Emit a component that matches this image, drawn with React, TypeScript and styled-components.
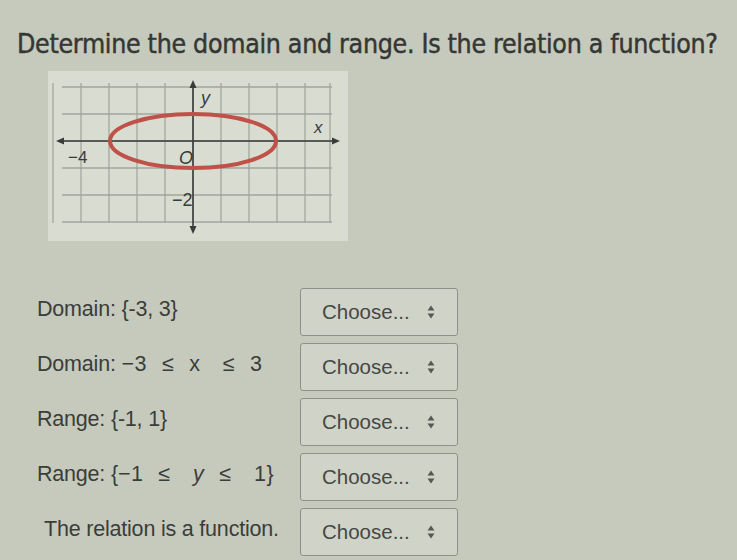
import React from 'react'
import styled, { createGlobalStyle } from 'styled-components'

const GlobalStyle = createGlobalStyle`
    html, body {
        margin: 0;
        padding: 0;
        background: #c6cabc;
    }
`;

interface Row {
    label: React.ReactNode;
    indent?: number;
}

const Graph = () => {
    const xs = [5, 33, 61, 89, 117, 145, 173, 201, 229, 257, 282];
    const ys = [16, 43, 70, 97, 124, 151];
    return (
        <svg width="300" height="170" viewBox="0 0 300 170">
            {xs.map((x) => (
                <line key={'v' + x} x1={x} y1={12} x2={x} y2={152} stroke="#a3a69c" strokeWidth="1.3" />
            ))}
            {ys.map((y) => (
                <line key={'h' + y} x1={14} y1={y} x2={284} y2={y} stroke="#a3a69c" strokeWidth="1.3" />
            ))}
            <line x1={10} y1={70} x2={290} y2={70} stroke="#3a3c3a" strokeWidth="1.6" />
            <path d="M8 70 L16 66.5 L16 73.5 Z" fill="#3a3c3a" />
            <path d="M292 70 L284 66.5 L284 73.5 Z" fill="#3a3c3a" />
            <line x1={145} y1={12} x2={145} y2={160} stroke="#3a3c3a" strokeWidth="1.6" />
            <path d="M145 9 L141.5 17 L148.5 17 Z" fill="#3a3c3a" />
            <path d="M145 163 L141.5 155 L148.5 155 Z" fill="#3a3c3a" />
            <ellipse cx={145} cy={70} rx={83} ry={27} fill="none" stroke="#bf5149" strokeWidth="4" />
            <g fontFamily="'Liberation Sans', Arial, sans-serif" fill="#3a3c3a">
                <text x={153} y={33} fontSize="18" fontStyle="italic">y</text>
                <text x={266} y={62} fontSize="17" fontStyle="italic">x</text>
                <text x={20} y={92} fontSize="17">−4</text>
                <text x={131} y={93} fontSize="18" fontStyle="italic">O</text>
                <text x={124} y={135} fontSize="18">−2</text>
            </g>
        </svg>
    );
};

const SortIcon = () => (
    <svg width="8" height="14" viewBox="0 0 8 14">
        <path d="M4 0.5 L7.5 5.5 L0.5 5.5 Z" fill="#555855" />
        <path d="M4 13.5 L7.5 8.5 L0.5 8.5 Z" fill="#555855" />
    </svg>
);

const App = () => {
    const rows: Row[] = [
        { label: <>Domain: {'{'}-3, 3{'}'}</> },
        { label: <>Domain: <MathText>−3 &nbsp;≤ &nbsp;x &nbsp;&nbsp;≤ &nbsp;3</MathText></> },
        { label: <>Range: {'{'}-1, 1{'}'}</> },
        { label: <>Range: {'{'}<MathText>−1 &nbsp;≤ &nbsp;&nbsp;<i>y</i> &nbsp;≤ &nbsp;&nbsp;1</MathText>{'}'}</> },
        { label: <>The relation is a function.</>, indent: 7 },
    ];

    return (
        <Page>
            <GlobalStyle />
            <Title>Determine the domain and range. Is the relation a function?</Title>
            <Figure>
                <Graph />
            </Figure>
            <List>
                {rows.map((row, index) => (
                    <RowLine key={index}>
                        <Label $indent={row.indent ?? 0}>{row.label}</Label>
                        <SelectBox>
                            <span>Choose...</span>
                            <SortIcon />
                        </SelectBox>
                    </RowLine>
                ))}
            </List>
        </Page>
    );
};

export default App


const Page = styled.div`
    width: 737px;
    height: 560px;
    box-sizing: border-box;
    padding: 28px 0 0 17px;
    overflow: hidden;
    color: #383b38;
    font-family: 'Liberation Sans', Arial, sans-serif;
`;

const Title = styled.h1`
    margin: 0;
    font-family: 'DejaVu Sans Condensed', 'DejaVu Sans', sans-serif;
    font-stretch: condensed;
    font-weight: 400;
    font-size: 26.5px;
    letter-spacing: -0.3px;
    color: #343734;
    -webkit-text-stroke: 0.45px #343734;
    white-space: nowrap;
`;

const Figure = styled.div`
    margin: 12px 0 0 31px;
    width: 300px;
    height: 170px;
    background: #d9dcd1;
    display: flex;
`;

const List = styled.div`
    margin-top: 46px;
    display: flex;
    flex-direction: column;
    gap: 5px;
`;

const RowLine = styled.div`
    display: grid;
    grid-template-columns: 283px 158px;
    align-items: center;
    height: 50px;
`;

const Label = styled.div<{ $indent: number }>`
    padding-left: ${(p) => 20 + p.$indent}px;
    font-size: 21.5px;
    letter-spacing: -0.2px;
    color: #3a3d3a;
    white-space: nowrap;
    margin-top: -6px;
`;

const MathText = styled.span`
    font-family: 'Liberation Sans', Arial, sans-serif;
    word-spacing: 1px;
    letter-spacing: 0.5px;
`;

const SelectBox = styled.div`
    box-sizing: border-box;
    height: 48px;
    border: 1.5px solid #8e918a;
    border-radius: 3px;
    background: #d0d3c7;
    display: flex;
    align-items: center;
    justify-content: space-between;
    padding: 0 22px 0 21px;
    font-size: 20.5px;
    color: #454845;
`;
